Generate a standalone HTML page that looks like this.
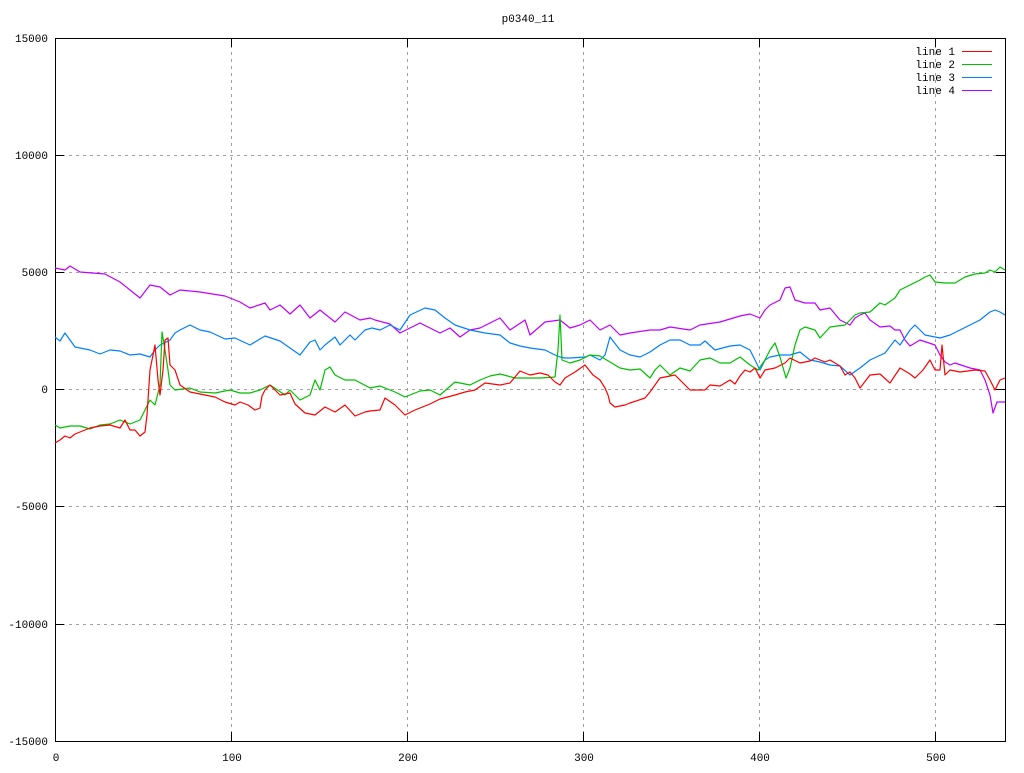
<!DOCTYPE html>
<html><head><style>
html,body{margin:0;padding:0;background:#fff;}
svg text{font-family:"Liberation Mono","DejaVu Sans Mono",monospace;font-size:11px;fill:#000;}
</style></head><body>
<svg width="1024" height="768" viewBox="0 0 1024 768" xmlns="http://www.w3.org/2000/svg">
<rect width="1024" height="768" fill="#fff"/>
<g stroke="#a0a0a0" stroke-width="1" stroke-dasharray="3,4" fill="none">
<path d="M231.5 38V741M407.5 38V741M583.5 38V741M759.5 38V741M935.5 38V741"/>
<path d="M55 155.5H1005M55 272.5H1005M55 389.5H1005M55 506.5H1005M55 624.5H1005"/>
</g>
<g stroke="#000" stroke-width="1" fill="none">
<rect x="55.5" y="38.5" width="950" height="703"/>
<path d="M55 38.5h9M55 155.5h9M55 272.5h9M55 389.5h9M55 506.5h9M55 624.5h9M55 741.5h9"/>
<path d="M1005 38.5h-9M1005 155.5h-9M1005 272.5h-9M1005 389.5h-9M1005 506.5h-9M1005 624.5h-9M1005 741.5h-9"/>
<path d="M55.5 741v-9M231.5 741v-9M407.5 741v-9M583.5 741v-9M759.5 741v-9M935.5 741v-9"/>
<path d="M55.5 38v9M231.5 38v9M407.5 38v9M583.5 38v9M759.5 38v9M935.5 38v9"/>
</g>
<g text-anchor="end">
<text x="48" y="42">15000</text><text x="48" y="159">10000</text><text x="48" y="276">5000</text>
<text x="48" y="393">0</text><text x="48" y="510">-5000</text><text x="48" y="628">-10000</text><text x="48" y="745">-15000</text>
</g>
<g text-anchor="middle">
<text x="56" y="761">0</text><text x="232" y="761">100</text><text x="408" y="761">200</text>
<text x="584" y="761">300</text><text x="760" y="761">400</text><text x="936" y="761">500</text>
<text x="528" y="22">p0340_11</text>
</g>
<g text-anchor="end">
<text x="955" y="55">line 1</text><text x="955" y="68">line 2</text><text x="955" y="81">line 3</text><text x="955" y="94">line 4</text>
</g>
<g stroke-width="1" fill="none">
<path d="M962 51.5h30" stroke="#ff0000"/><path d="M962 64.5h30" stroke="#00c000"/>
<path d="M962 77.5h30" stroke="#0080ff"/><path d="M962 90.5h30" stroke="#c000ff"/>
</g>
<g fill="none" stroke-width="1.2" stroke-linejoin="round">
<polyline stroke="#c000ff" points="55,268 65,270 70,266 80,272 105,274 120,282 130,290 140,298 150,285 160,287 170,295 180,290 200,292 225,296 240,302 250,308 265,303 270,310 280,305 290,314 300,305 310,318 320,310 335,322 345,312 360,320 370,318 375,320 390,324 400,333 420,323 440,333 450,328 460,337 470,330 480,328 500,318 510,330 525,320 530,335 545,322 560,320 570,328 580,325 590,320 600,330 610,325 620,335 630,333 650,330 660,330 670,327 690,330 700,325 720,322 740,316 750,314 760,318 765,310 770,305 780,300 785,288 790,287 795,300 805,303 815,303 820,310 830,308 840,320 850,325 855,318 860,315 865,313 870,320 880,327 890,326 895,330 900,330 905,340 910,346 920,340 935,345 940,355 945,362 950,365 955,363 970,368 980,370 985,380 990,395 993,413 997,402 1005,402"/>
<polyline stroke="#0080ff" points="55,337 60,341 65,333 70,340 75,347 90,350 100,354 110,350 120,351 130,355 140,354 150,357 155,350 160,345 170,340 175,333 180,330 190,325 200,330 210,332 225,339 235,338 250,345 265,336 280,341 290,348 300,355 310,342 315,340 320,350 325,345 335,337 340,345 350,335 355,340 365,330 372,328 380,330 390,325 400,330 410,315 425,308 435,310 445,318 455,325 470,330 485,333 500,335 510,343 520,346 530,348 545,350 555,355 560,357 565,358 570,358 585,357 590,355 600,360 605,355 610,337 620,350 630,355 640,357 650,352 660,345 670,340 680,340 690,345 700,345 705,341 715,350 730,346 740,345 750,350 760,370 765,360 770,357 780,355 790,355 800,352 810,360 820,362 830,365 840,366 850,375 860,368 870,360 885,353 895,340 900,345 910,330 915,325 925,335 940,338 950,335 960,330 970,325 980,320 990,312 995,310 1000,312 1005,315"/>
<polyline stroke="#00c000" points="55,425 60,428 70,426 80,426 90,429 100,425 110,424 120,420 130,424 140,420 145,410 150,400 155,405 160,385 162,332 165,350 168,370 170,385 175,390 190,388 200,392 215,393 230,390 240,393 250,393 260,390 270,385 285,395 290,390 300,400 310,395 315,380 320,390 325,370 330,367 335,375 345,380 355,380 370,388 380,386 395,392 405,397 420,391 430,390 440,395 455,382 470,385 480,380 490,376 500,374 515,378 525,378 540,378 555,377 558,350 560,315 562,360 570,363 580,360 590,355 600,356 610,362 620,368 630,370 640,369 650,378 655,370 660,365 670,375 680,368 690,371 700,360 710,358 720,363 730,363 740,357 750,365 758,370 765,360 770,350 775,343 780,357 786,378 790,368 795,345 800,330 805,327 815,330 820,338 830,327 845,325 855,315 860,313 870,312 880,303 885,305 895,298 900,290 910,285 920,280 925,277 930,275 935,282 945,283 955,283 965,277 975,274 985,273 990,270 995,272 1000,267 1005,270"/>
<polyline stroke="#ff0000" points="55,443 60,440 65,436 70,438 75,434 80,432 85,430 90,428 100,426 110,425 120,428 125,420 130,430 135,430 140,436 145,432 147,415 150,370 155,345 158,380 160,395 163,370 165,340 168,338 170,365 175,370 180,385 190,392 205,395 215,397 225,402 235,405 240,402 248,405 255,410 260,408 262,396 265,390 270,385 280,395 290,393 295,404 305,413 315,415 325,407 335,412 345,405 355,416 365,412 370,411 380,410 385,398 395,405 405,415 415,410 430,404 440,399 455,395 465,392 475,390 485,383 500,385 510,383 520,371 530,375 540,373 548,375 555,382 560,385 565,378 575,372 585,365 593,375 600,380 605,388 608,395 610,403 615,407 625,405 630,403 645,398 650,392 655,385 660,378 665,377 675,375 682,382 690,390 705,390 710,385 720,386 730,380 735,384 740,376 745,370 750,372 755,368 760,378 765,370 775,368 785,363 790,358 800,363 810,361 815,358 825,362 830,360 840,366 845,375 850,372 855,378 860,388 870,375 880,374 890,383 900,368 910,374 915,378 923,370 930,360 935,370 940,370 942,345 945,375 950,370 960,372 975,370 985,371 990,380 995,390 1000,380 1005,378"/>
</g>
</svg>
</body></html>
